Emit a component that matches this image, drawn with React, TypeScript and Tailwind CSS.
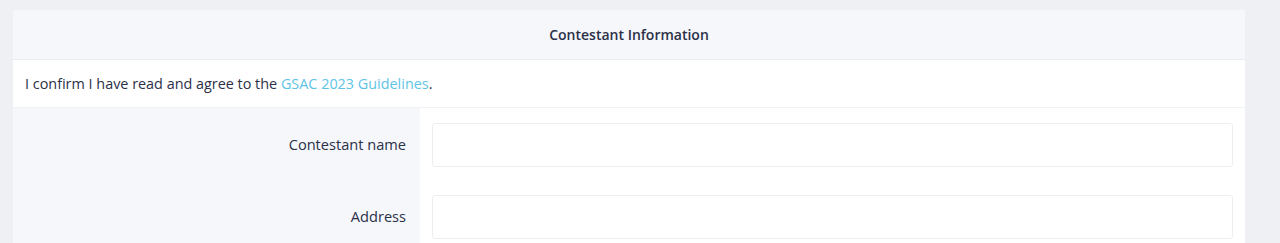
export default function App() {
  const fields = ["Contestant name", "Address"];
  return (
    <div
      className="min-h-screen bg-[#eef0f4] pt-[10px] pl-[13px] pr-[35px]"
      style={{ fontFamily: '"Open Sans", "Liberation Sans", sans-serif' }}
    >
      <div className="bg-white rounded-t-[3px] overflow-hidden">
        <div className="h-[50px] flex items-center justify-center bg-[#f5f7fb] border-b border-[#e9ecf2]">
          <span className="text-[14px] font-semibold text-[#2b3048]">Contestant Information</span>
        </div>
        <div className="h-[48px] flex items-center px-[12px] border-b border-[#f1f3f7]">
          <span className="text-[14.4px] text-[#2b3048]">
            I confirm I have read and agree to the{" "}
            <a className="text-[#5ec4e6]">GSAC 2023 Guidelines</a>.
          </span>
        </div>
        {fields.map((f) => (
          <div key={f} className="flex h-[72px]">
            <div className="w-[407px] bg-[#f5f7fb] flex items-start justify-end pt-[26px] pr-[14px]">
              <span className="text-[14.6px] text-[#2b3048]">{f}</span>
            </div>
            <div className="flex-1 pt-[15px] pl-[12px] pr-[12px]">
              <input className="w-full h-[44px] border border-[#eceef2] rounded-[3px] bg-white outline-none" />
            </div>
          </div>
        ))}
      </div>
    </div>
  );
}
